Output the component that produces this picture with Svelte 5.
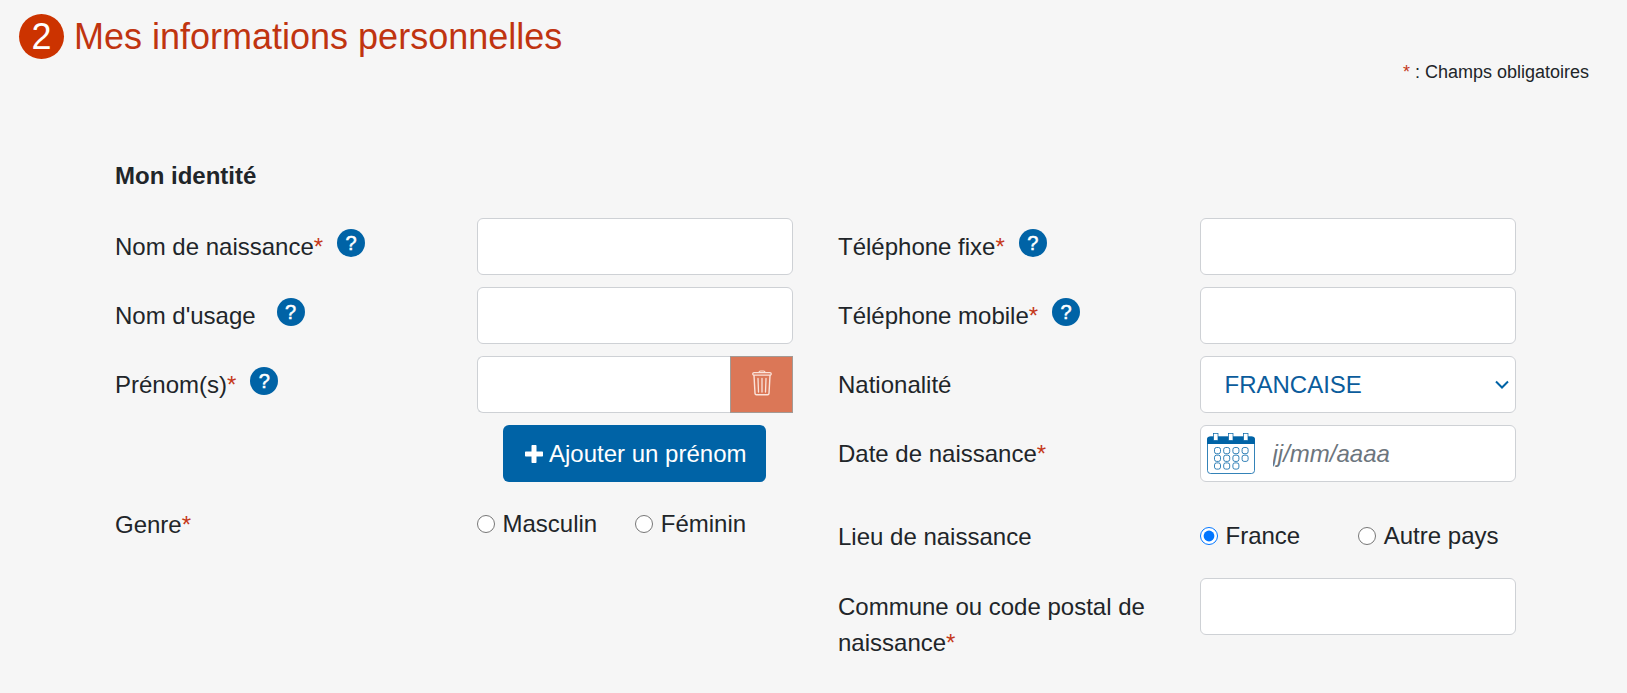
<script>
  let nomNaissance = ""
  let nomUsage = ""
  let prenom = ""
  let telFixe = ""
  let telMobile = ""
  let nationalite = "FRANCAISE"
  let dateNaissance = ""
  let genre = ""
  let lieu = "france"
  let commune = ""

  // Cases du calendrier : deux rangées de 4, une de 3
  const cases = [0, 1, 2, 3, 4, 5, 6, 7, 8, 9, 10].map(i => ({
    x: 7.5 + (i % 4) * 9.2,
    y: 14.5 + Math.floor(i / 4) * 7.7
  }))
</script>

{#snippet etoile()}<span class="required">*</span>{/snippet}

{#snippet aide(texte)}
  <button type="button" class="help" aria-label={texte}>?</button>
{/snippet}

<main>
  <h1><span class="step">2</span>Mes informations personnelles</h1>
  <p class="legend">{@render etoile()} : Champs obligatoires</p>

  <form>
    <h2>Mon identité</h2>

    <div class="columns">
      <div class="column">
        <div class="row">
          <div class="label">
            <label for="nom-naissance">Nom de naissance{@render etoile()}</label>
            {@render aide("Aide nom de naissance")}
          </div>
          <input id="nom-naissance" class="field" type="text" bind:value={nomNaissance} />
        </div>

        <div class="row">
          <div class="label">
            <label for="nom-usage" class="optional">Nom d'usage</label>
            {@render aide("Aide nom d'usage")}
          </div>
          <input id="nom-usage" class="field" type="text" bind:value={nomUsage} />
        </div>

        <div class="row">
          <div class="label">
            <label for="prenom">Prénom(s){@render etoile()}</label>
            {@render aide("Aide prénoms")}
          </div>
          <div class="group">
            <input id="prenom" class="field" type="text" bind:value={prenom} />
            <button type="button" class="trash" aria-label="Supprimer le prénom" on:click={() => (prenom = "")}>
              <svg width="20" height="26" viewBox="0 0 20 26" fill="none" stroke="currentColor" stroke-linecap="round" stroke-linejoin="round">
                <path d="M7 2.5Q7 1 8.5 1h3Q13 1 13 2.5" stroke-width="1.2" />
                <rect x="0.8" y="2.6" width="18.4" height="2.6" rx="1.2" stroke-width="1.3" />
                <path d="M2 5.4L3 23.4Q3.100 24.800 4.400 24.800h11.200q1.300 0 1.400-1.400L18 5.4" stroke-width="1.4" />
                <path d="M6 8.500l.5 13.500M10 8.500v13.500M14 8.500l-.5 13.500" stroke-width="1.3" />
              </svg>
            </button>
          </div>
        </div>

        <div class="row">
          <div class="add-cell">
            <button type="button" class="add">
              <svg width="18" height="18" viewBox="0 0 18 18" fill="currentColor">
                <path d="M7.2 0h3.600q.7 0 .7.7v5.800h5.800q.7 0 .7.7v3.600q0 .7-.7.7h-5.800v5.800q0 .7-.7.7h-3.600q-.7 0-.7-.7v-5.800H.7q-.7 0-.7-.7v-3.600q0-.7.7-.7h5.800V.7q0-.7.7-.7z" />
              </svg>
              Ajouter un prénom
            </button>
          </div>
        </div>

        <div class="row gender">
          <div class="label" id="genre-label">Genre{@render etoile()}</div>
          <div class="radios" role="radiogroup" aria-labelledby="genre-label">
            <label><input type="radio" name="genre" value="m" bind:group={genre} />Masculin</label>
            <label><input type="radio" name="genre" value="f" bind:group={genre} />Féminin</label>
          </div>
        </div>
      </div>

      <div class="column">
        <div class="row">
          <div class="label">
            <label for="tel-fixe">Téléphone fixe{@render etoile()}</label>
            {@render aide("Aide téléphone fixe")}
          </div>
          <input id="tel-fixe" class="field" type="tel" bind:value={telFixe} />
        </div>

        <div class="row">
          <div class="label">
            <label for="tel-mobile">Téléphone mobile{@render etoile()}</label>
            {@render aide("Aide téléphone mobile")}
          </div>
          <input id="tel-mobile" class="field" type="tel" bind:value={telMobile} />
        </div>

        <div class="row">
          <div class="label"><label for="nationalite">Nationalité</label></div>
          <div class="select">
            <select id="nationalite" class="field" bind:value={nationalite}>
              <option value="FRANCAISE">FRANCAISE</option>
            </select>
            <svg class="chevron" width="14" height="10" viewBox="0 0 14 10" fill="none" stroke="currentColor" stroke-width="2">
              <path d="M1 1.5l6 6 6-6" />
            </svg>
          </div>
        </div>

        <div class="row">
          <div class="label"><label for="date-naissance">Date de naissance{@render etoile()}</label></div>
          <div class="field date">
            <svg width="48" height="41" viewBox="0 0 48 41" fill="none" stroke="#0063a6">
              <rect x="0.5" y="4" width="47" height="36.5" rx="3" fill="#fff" stroke-width="0.8" />
              <path d="M0 11V6.5Q0 3.5 3 3.5h42q3 0 3 3V11z" fill="#0063a6" stroke="none" />
              <rect x="6.5" y="0.5" width="4.5" height="7" fill="#fff" stroke-width="0.7" />
              <rect x="21.5" y="0.5" width="4.500" height="7" fill="#fff" stroke-width="0.7" />
              <rect x="36.5" y="0.5" width="4.500" height="7" fill="#fff" stroke-width="0.7" />
              {#each cases as c}
                <rect x={c.x} y={c.y} width="6" height="6.2" rx="2" stroke-width="0.8" />
              {/each}
            </svg>
            <input id="date-naissance" type="text" placeholder="jj/mm/aaaa" bind:value={dateNaissance} />
          </div>
        </div>

        <div class="row birthplace">
          <div class="label" id="lieu-label">Lieu de naissance</div>
          <div class="radios" role="radiogroup" aria-labelledby="lieu-label">
            <label><input type="radio" name="lieu" value="france" bind:group={lieu} />France</label>
            <label><input type="radio" name="lieu" value="autre" bind:group={lieu} />Autre pays</label>
          </div>
        </div>

        <div class="row">
          <div class="label wrap">
            <label for="commune">Commune ou code postal de <span class="nowrap">naissance{@render etoile()}</span></label>
          </div>
          <input id="commune" class="field" type="text" bind:value={commune} />
        </div>
      </div>
    </div>
  </form>
</main>

<style>
  :global(body) {
    background: #f6f6f6;
  }

  main {
    font-family: "Liberation Sans", Arial, sans-serif;
    font-size: 24px;
    line-height: 36px;
    color: #212529;
    padding: 14px 38px 24px 19px;
  }

  h1,
  h2,
  p {
    margin: 0;
  }

  h1 {
    display: flex;
    align-items: center;
    gap: 10px;
    font-size: 36px;
    font-weight: 400;
    line-height: 45px;
    color: #c03410;
  }

  .step {
    width: 45px;
    height: 45px;
    border-radius: 50%;
    background: #cc3300;
    color: #fff;
    text-align: center;
  }

  .legend {
    font-size: 18px;
    line-height: 26px;
    text-align: right;
  }

  .required {
    color: #c5391b;
  }

  form {
    padding: 73px 73px 0 96px;
  }

  h2 {
    font-size: 24px;
    line-height: 36px;
    margin-bottom: 24px;
  }

  .columns {
    display: grid;
    grid-template-columns: 1fr 1fr;
    gap: 45px;
  }

  .column {
    display: flex;
    flex-direction: column;
    gap: 12px;
  }

  .row {
    display: grid;
    grid-template-columns: 1fr 1fr;
    column-gap: 45px;
    align-items: start;
  }

  .label {
    display: flex;
    align-items: flex-start;
    gap: 14px;
    padding-top: 11px;
    white-space: nowrap;
  }

  #genre-label {
    gap: 0;
  }

  .wrap {
    white-space: normal;
  }

  .nowrap {
    white-space: nowrap;
  }

  .optional {
    margin-right: 7px;
  }

  .help {
    width: 28px;
    height: 28px;
    padding: 0;
    border: 0;
    border-radius: 50%;
    background: #0063a6;
    color: #fff;
    font: 400 20px/26px "Liberation Sans", Arial, sans-serif;
    -webkit-text-stroke: 0.5px #fff;
    cursor: pointer;
  }

  .field {
    box-sizing: border-box;
    width: 100%;
    min-width: 0;
    height: 57px;
    padding: 8px 16px;
    border: 1px solid #ced1d5;
    border-radius: 6px;
    background: #fff;
    color: #212529;
    font: inherit;
  }

  .group {
    display: flex;
  }

  .group .field {
    flex: 1;
    border-right: 0;
    border-radius: 6px 0 0 6px;
  }

  .trash {
    display: flex;
    align-items: center;
    justify-content: center;
    width: 63px;
    padding: 0 0 4px;
    border: 1px solid #a39a95;
    background: #db7757;
    color: #fbe3da;
    cursor: pointer;
  }

  .add-cell {
    grid-column: 2;
    display: flex;
    justify-content: center;
  }

  .add {
    display: flex;
    align-items: center;
    gap: 6px;
    height: 57px;
    padding: 0 20px 0 22px;
    border: 0;
    border-radius: 6px;
    background: #0063a6;
    color: #fff;
    font: inherit;
    white-space: nowrap;
    cursor: pointer;
  }

  .gender {
    margin-top: 2px;
  }

  .birthplace {
    margin-top: 14px;
    min-height: 58px;
  }

  .radios {
    display: grid;
    grid-template-columns: 1fr 1fr;
    padding-top: 10px;
    white-space: nowrap;
  }

  .radios label {
    display: flex;
    align-items: center;
    gap: 8px;
  }

  .radios input {
    width: 18px;
    height: 18px;
    margin: 0;
    accent-color: #0075ff;
  }

  .select {
    position: relative;
  }

  select.field {
    display: block;
    appearance: none;
    padding: 8px 32px 8px 24px;
    color: #0b5c9c;
  }

  .chevron {
    position: absolute;
    right: 7px;
    top: 24px;
    color: #0063a6;
    pointer-events: none;
  }

  .date {
    display: flex;
    align-items: center;
    gap: 18px;
    padding: 0 6px;
  }

  .date svg {
    flex: none;
  }

  .date input {
    flex: 1;
    min-width: 0;
    padding: 0;
    border: 0;
    background: none;
    color: #212529;
    font: inherit;
  }

  .date input::placeholder {
    color: #6c757d;
    font-style: italic;
    opacity: 1;
  }
</style>
